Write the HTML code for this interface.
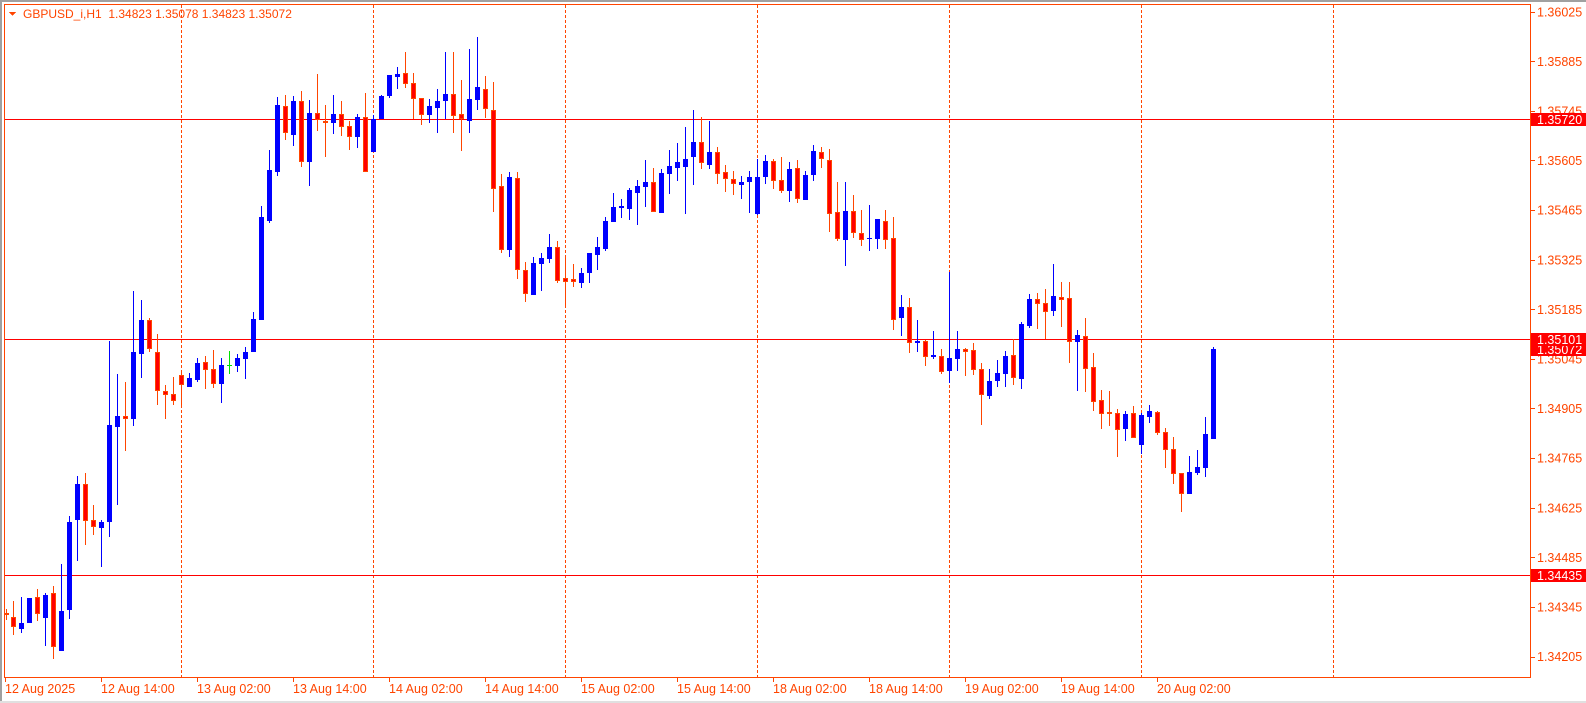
<!DOCTYPE html>
<html><head><meta charset="utf-8"><style>
html,body{margin:0;padding:0;background:#fff;width:1586px;height:703px;overflow:hidden}
svg{display:block}
text{font-family:"Liberation Sans",sans-serif;fill:#ff4500}
.b{fill:#0000ff}.w{fill:#ff4500}.r{fill:#ff0000;stroke:#ff4500;stroke-width:1}.g{fill:#00e000}
</style></head><body>
<svg width="1586" height="703" viewBox="0 0 1586 703" xmlns="http://www.w3.org/2000/svg" shape-rendering="crispEdges">
<rect x="0" y="0" width="1586" height="703" fill="#fff"/>
<rect x="0" y="0" width="1586" height="2" fill="#a0a0a0"/>
<rect x="0" y="0" width="2" height="703" fill="#a0a0a0"/>
<rect x="0" y="701" width="1586" height="2" fill="#e0e0e0"/>
<g stroke="#ff4500" stroke-width="1" stroke-dasharray="3,2">
<line x1="181.5" y1="5" x2="181.5" y2="677"/><line x1="373.5" y1="5" x2="373.5" y2="677"/><line x1="565.5" y1="5" x2="565.5" y2="677"/><line x1="757.5" y1="5" x2="757.5" y2="677"/><line x1="949.5" y1="5" x2="949.5" y2="677"/><line x1="1141.5" y1="5" x2="1141.5" y2="677"/><line x1="1333.5" y1="5" x2="1333.5" y2="677"/>
</g>
<g fill="#ff0000">
<rect x="4" y="119" width="1526" height="1"/><rect x="4" y="339" width="1526" height="1"/><rect x="4" y="575" width="1526" height="1"/>
</g>
<g id="c">
<rect class="w" x="6" y="609" width="1" height="11"/><rect class="r" x="4.5" y="613.5" width="4" height="1"/>
<rect class="w" x="13" y="601" width="1" height="34"/><rect class="r" x="11.5" y="617.5" width="4" height="9"/>
<rect class="b" x="21" y="597" width="1" height="36"/><rect class="b" x="19" y="623" width="5" height="6"/>
<rect class="b" x="27" y="598" width="5" height="25"/>
<rect class="w" x="37" y="589" width="1" height="32"/><rect class="r" x="35.5" y="597.5" width="4" height="16"/>
<rect class="b" x="45" y="593" width="1" height="53"/><rect class="b" x="43" y="595" width="5" height="23"/>
<rect class="w" x="53" y="586" width="1" height="73"/><rect class="r" x="51.5" y="593.5" width="4" height="53"/>
<rect class="b" x="61" y="564" width="1" height="87"/><rect class="b" x="59" y="611" width="5" height="40"/>
<rect class="b" x="69" y="516" width="1" height="103"/><rect class="b" x="67" y="522" width="5" height="88"/>
<rect class="b" x="77" y="476" width="1" height="85"/><rect class="b" x="75" y="484" width="5" height="36"/>
<rect class="w" x="85" y="473" width="1" height="72"/><rect class="r" x="83.5" y="484.5" width="4" height="36"/>
<rect class="w" x="93" y="505" width="1" height="30"/><rect class="r" x="91.5" y="520.5" width="4" height="6"/>
<rect class="b" x="101" y="520" width="1" height="47"/><rect class="b" x="99" y="522" width="5" height="6"/>
<rect class="b" x="109" y="341" width="1" height="196"/><rect class="b" x="107" y="425" width="5" height="97"/>
<rect class="b" x="117" y="374" width="1" height="131"/><rect class="b" x="115" y="416" width="5" height="11"/>
<rect class="w" x="125" y="382" width="1" height="69"/><rect class="r" x="123.5" y="416.5" width="4" height="2"/>
<rect class="b" x="133" y="291" width="1" height="135"/><rect class="b" x="131" y="352" width="5" height="67"/>
<rect class="b" x="141" y="300" width="1" height="78"/><rect class="b" x="139" y="320" width="5" height="34"/>
<rect class="w" x="149" y="318" width="1" height="34"/><rect class="r" x="147.5" y="320.5" width="4" height="28"/>
<rect class="w" x="157" y="334" width="1" height="71"/><rect class="r" x="155.5" y="352.5" width="4" height="38"/>
<rect class="w" x="165" y="385" width="1" height="34"/><rect class="r" x="163.5" y="391.5" width="4" height="3"/>
<rect class="w" x="173" y="377" width="1" height="28"/><rect class="r" x="171.5" y="394.5" width="4" height="6"/>
<rect class="w" x="181" y="370" width="1" height="38"/><rect class="r" x="179.5" y="375.5" width="4" height="9"/>
<rect class="b" x="189" y="373" width="1" height="14"/><rect class="b" x="187" y="378" width="5" height="9"/>
<rect class="b" x="197" y="358" width="1" height="24"/><rect class="b" x="195" y="363" width="5" height="17"/>
<rect class="w" x="205" y="356" width="1" height="33"/><rect class="r" x="203.5" y="362.5" width="4" height="7"/>
<rect class="w" x="213" y="350" width="1" height="38"/><rect class="r" x="211.5" y="369.5" width="4" height="14"/>
<rect class="b" x="221" y="358" width="1" height="45"/><rect class="b" x="219" y="365" width="5" height="19"/>
<rect class="g" x="229" y="351" width="1" height="23"/><rect class="g" x="227" y="365" width="5" height="1"/>
<rect class="b" x="237" y="354" width="1" height="18"/><rect class="b" x="235" y="358" width="5" height="8"/>
<rect class="b" x="245" y="347" width="1" height="32"/><rect class="b" x="243" y="352" width="5" height="7"/>
<rect class="b" x="253" y="312" width="1" height="40"/><rect class="b" x="251" y="319" width="5" height="33"/>
<rect class="b" x="261" y="206" width="1" height="114"/><rect class="b" x="259" y="217" width="5" height="103"/>
<rect class="b" x="269" y="150" width="1" height="73"/><rect class="b" x="267" y="170" width="5" height="51"/>
<rect class="b" x="277" y="97" width="1" height="79"/><rect class="b" x="275" y="105" width="5" height="67"/>
<rect class="w" x="285" y="95" width="1" height="45"/><rect class="r" x="283.5" y="106.5" width="4" height="26"/>
<rect class="b" x="293" y="96" width="1" height="50"/><rect class="b" x="291" y="101" width="5" height="34"/>
<rect class="w" x="301" y="91" width="1" height="76"/><rect class="r" x="299.5" y="101.5" width="4" height="60"/>
<rect class="b" x="309" y="100" width="1" height="86"/><rect class="b" x="307" y="113" width="5" height="49"/>
<rect class="w" x="317" y="74" width="1" height="57"/><rect class="r" x="315.5" y="113.5" width="4" height="6"/>
<rect class="w" x="325" y="105" width="1" height="52"/><rect class="r" x="323.5" y="121.5" width="4" height="1"/>
<rect class="b" x="333" y="95" width="1" height="39"/><rect class="b" x="331" y="114" width="5" height="9"/>
<rect class="w" x="341" y="101" width="1" height="35"/><rect class="r" x="339.5" y="114.5" width="4" height="12"/>
<rect class="w" x="349" y="121" width="1" height="29"/><rect class="r" x="347.5" y="126.5" width="4" height="10"/>
<rect class="b" x="357" y="114" width="1" height="34"/><rect class="b" x="355" y="117" width="5" height="20"/>
<rect class="w" x="365" y="93" width="1" height="79"/><rect class="r" x="363.5" y="117.5" width="4" height="54"/>
<rect class="b" x="373" y="115" width="1" height="37"/><rect class="b" x="371" y="119" width="5" height="33"/>
<rect class="b" x="381" y="95" width="1" height="24"/><rect class="b" x="379" y="96" width="5" height="23"/>
<rect class="b" x="389" y="75" width="1" height="23"/><rect class="b" x="387" y="75" width="5" height="21"/>
<rect class="b" x="397" y="67" width="1" height="22"/><rect class="b" x="395" y="74" width="5" height="3"/>
<rect class="w" x="405" y="52" width="1" height="36"/><rect class="r" x="403.5" y="73.5" width="4" height="10"/>
<rect class="w" x="413" y="73" width="1" height="46"/><rect class="r" x="411.5" y="83.5" width="4" height="15"/>
<rect class="w" x="421" y="98" width="1" height="27"/><rect class="r" x="419.5" y="98.5" width="4" height="16"/>
<rect class="b" x="429" y="99" width="1" height="24"/><rect class="b" x="427" y="106" width="5" height="9"/>
<rect class="b" x="437" y="89" width="1" height="44"/><rect class="b" x="435" y="101" width="5" height="7"/>
<rect class="b" x="445" y="52" width="1" height="67"/><rect class="b" x="443" y="94" width="5" height="7"/>
<rect class="w" x="453" y="52" width="1" height="81"/><rect class="r" x="451.5" y="94.5" width="4" height="21"/>
<rect class="w" x="461" y="80" width="1" height="71"/><rect class="r" x="459.5" y="114.5" width="4" height="4"/>
<rect class="b" x="469" y="49" width="1" height="84"/><rect class="b" x="467" y="99" width="5" height="22"/>
<rect class="b" x="477" y="37" width="1" height="73"/><rect class="b" x="475" y="87" width="5" height="13"/>
<rect class="w" x="485" y="76" width="1" height="42"/><rect class="r" x="483.5" y="89.5" width="4" height="19"/>
<rect class="w" x="493" y="82" width="1" height="130"/><rect class="r" x="491.5" y="110.5" width="4" height="78"/>
<rect class="w" x="501" y="174" width="1" height="79"/><rect class="r" x="499.5" y="186.5" width="4" height="63"/>
<rect class="b" x="509" y="172" width="1" height="85"/><rect class="b" x="507" y="177" width="5" height="73"/>
<rect class="w" x="517" y="172" width="1" height="107"/><rect class="r" x="515.5" y="178.5" width="4" height="91"/>
<rect class="w" x="525" y="262" width="1" height="40"/><rect class="r" x="523.5" y="270.5" width="4" height="23"/>
<rect class="b" x="533" y="257" width="1" height="38"/><rect class="b" x="531" y="263" width="5" height="32"/>
<rect class="b" x="541" y="253" width="1" height="38"/><rect class="b" x="539" y="258" width="5" height="6"/>
<rect class="b" x="549" y="234" width="1" height="29"/><rect class="b" x="547" y="247" width="5" height="12"/>
<rect class="w" x="557" y="241" width="1" height="42"/><rect class="r" x="555.5" y="247.5" width="4" height="33"/>
<rect class="w" x="565" y="256" width="1" height="51"/><rect class="r" x="563.5" y="278.5" width="4" height="3"/>
<rect class="w" x="573" y="264" width="1" height="23"/><rect class="r" x="571.5" y="279.5" width="4" height="2"/>
<rect class="b" x="581" y="268" width="1" height="20"/><rect class="b" x="579" y="273" width="5" height="10"/>
<rect class="b" x="589" y="253" width="1" height="30"/><rect class="b" x="587" y="253" width="5" height="20"/>
<rect class="b" x="597" y="237" width="1" height="33"/><rect class="b" x="595" y="247" width="5" height="8"/>
<rect class="b" x="605" y="217" width="1" height="34"/><rect class="b" x="603" y="221" width="5" height="28"/>
<rect class="b" x="613" y="193" width="1" height="29"/><rect class="b" x="611" y="207" width="5" height="15"/>
<rect class="b" x="621" y="199" width="1" height="19"/><rect class="b" x="619" y="206" width="5" height="2"/>
<rect class="b" x="629" y="188" width="1" height="32"/><rect class="b" x="627" y="190" width="5" height="19"/>
<rect class="b" x="637" y="180" width="1" height="45"/><rect class="b" x="635" y="186" width="5" height="7"/>
<rect class="b" x="645" y="160" width="1" height="47"/><rect class="b" x="643" y="182" width="5" height="5"/>
<rect class="w" x="653" y="168" width="1" height="44"/><rect class="r" x="651.5" y="182.5" width="4" height="29"/>
<rect class="b" x="661" y="169" width="1" height="44"/><rect class="b" x="659" y="173" width="5" height="40"/>
<rect class="b" x="669" y="150" width="1" height="44"/><rect class="b" x="667" y="166" width="5" height="8"/>
<rect class="b" x="677" y="143" width="1" height="38"/><rect class="b" x="675" y="162" width="5" height="6"/>
<rect class="b" x="685" y="127" width="1" height="87"/><rect class="b" x="683" y="159" width="5" height="8"/>
<rect class="b" x="693" y="110" width="1" height="75"/><rect class="b" x="691" y="142" width="5" height="15"/>
<rect class="w" x="701" y="117" width="1" height="52"/><rect class="r" x="699.5" y="142.5" width="4" height="20"/>
<rect class="b" x="709" y="121" width="1" height="48"/><rect class="b" x="707" y="152" width="5" height="13"/>
<rect class="w" x="717" y="147" width="1" height="37"/><rect class="r" x="715.5" y="152.5" width="4" height="21"/>
<rect class="w" x="725" y="165" width="1" height="27"/><rect class="r" x="723.5" y="172.5" width="4" height="6"/>
<rect class="w" x="733" y="171" width="1" height="24"/><rect class="r" x="731.5" y="179.5" width="4" height="4"/>
<rect class="b" x="741" y="176" width="1" height="23"/><rect class="b" x="739" y="182" width="5" height="3"/>
<rect class="b" x="749" y="171" width="1" height="42"/><rect class="b" x="747" y="177" width="5" height="5"/>
<rect class="b" x="757" y="159" width="1" height="56"/><rect class="b" x="755" y="177" width="5" height="37"/>
<rect class="b" x="765" y="155" width="1" height="29"/><rect class="b" x="763" y="161" width="5" height="16"/>
<rect class="w" x="773" y="159" width="1" height="30"/><rect class="r" x="771.5" y="161.5" width="4" height="19"/>
<rect class="w" x="781" y="157" width="1" height="36"/><rect class="r" x="779.5" y="180.5" width="4" height="10"/>
<rect class="b" x="789" y="162" width="1" height="40"/><rect class="b" x="787" y="169" width="5" height="22"/>
<rect class="w" x="797" y="160" width="1" height="43"/><rect class="r" x="795.5" y="168.5" width="4" height="30"/>
<rect class="b" x="805" y="171" width="1" height="29"/><rect class="b" x="803" y="175" width="5" height="25"/>
<rect class="b" x="813" y="145" width="1" height="36"/><rect class="b" x="811" y="151" width="5" height="24"/>
<rect class="w" x="821" y="147" width="1" height="21"/><rect class="r" x="819.5" y="152.5" width="4" height="6"/>
<rect class="w" x="829" y="149" width="1" height="83"/><rect class="r" x="827.5" y="160.5" width="4" height="53"/>
<rect class="w" x="837" y="182" width="1" height="59"/><rect class="r" x="835.5" y="212.5" width="4" height="26"/>
<rect class="b" x="845" y="182" width="1" height="84"/><rect class="b" x="843" y="211" width="5" height="29"/>
<rect class="w" x="853" y="195" width="1" height="43"/><rect class="r" x="851.5" y="211.5" width="4" height="21"/>
<rect class="w" x="861" y="210" width="1" height="36"/><rect class="r" x="859.5" y="233.5" width="4" height="6"/>
<rect class="b" x="869" y="205" width="1" height="46"/><rect class="b" x="867" y="238" width="5" height="1"/>
<rect class="b" x="877" y="219" width="1" height="30"/><rect class="b" x="875" y="219" width="5" height="20"/>
<rect class="w" x="885" y="210" width="1" height="39"/><rect class="r" x="883.5" y="221.5" width="4" height="18"/>
<rect class="w" x="893" y="217" width="1" height="113"/><rect class="r" x="891.5" y="238.5" width="4" height="81"/>
<rect class="b" x="901" y="295" width="1" height="41"/><rect class="b" x="899" y="307" width="5" height="11"/>
<rect class="w" x="909" y="298" width="1" height="55"/><rect class="r" x="907.5" y="307.5" width="4" height="35"/>
<rect class="b" x="917" y="320" width="1" height="32"/><rect class="b" x="915" y="341" width="5" height="2"/>
<rect class="w" x="925" y="340" width="1" height="26"/><rect class="r" x="923.5" y="341.5" width="4" height="15"/>
<rect class="b" x="933" y="331" width="1" height="28"/><rect class="b" x="931" y="355" width="5" height="2"/>
<rect class="w" x="941" y="349" width="1" height="25"/><rect class="r" x="939.5" y="356.5" width="4" height="15"/>
<rect class="b" x="949" y="272" width="1" height="111"/><rect class="b" x="947" y="358" width="5" height="13"/>
<rect class="b" x="957" y="331" width="1" height="40"/><rect class="b" x="955" y="349" width="5" height="10"/>
<rect class="w" x="965" y="348" width="1" height="28"/><rect class="r" x="963.5" y="349.5" width="4" height="2"/>
<rect class="w" x="973" y="343" width="1" height="32"/><rect class="r" x="971.5" y="350.5" width="4" height="19"/>
<rect class="w" x="981" y="363" width="1" height="62"/><rect class="r" x="979.5" y="369.5" width="4" height="25"/>
<rect class="b" x="989" y="369" width="1" height="30"/><rect class="b" x="987" y="381" width="5" height="15"/>
<rect class="b" x="997" y="360" width="1" height="27"/><rect class="b" x="995" y="373" width="5" height="8"/>
<rect class="b" x="1005" y="351" width="1" height="36"/><rect class="b" x="1003" y="356" width="5" height="18"/>
<rect class="w" x="1013" y="339" width="1" height="46"/><rect class="r" x="1011.5" y="355.5" width="4" height="22"/>
<rect class="b" x="1021" y="322" width="1" height="67"/><rect class="b" x="1019" y="324" width="5" height="55"/>
<rect class="b" x="1029" y="294" width="1" height="34"/><rect class="b" x="1027" y="299" width="5" height="27"/>
<rect class="w" x="1037" y="293" width="1" height="36"/><rect class="r" x="1035.5" y="299.5" width="4" height="4"/>
<rect class="w" x="1045" y="289" width="1" height="50"/><rect class="r" x="1043.5" y="303.5" width="4" height="8"/>
<rect class="b" x="1053" y="264" width="1" height="52"/><rect class="b" x="1051" y="296" width="5" height="15"/>
<rect class="w" x="1061" y="282" width="1" height="45"/><rect class="r" x="1059.5" y="297.5" width="4" height="2"/>
<rect class="w" x="1069" y="282" width="1" height="81"/><rect class="r" x="1067.5" y="298.5" width="4" height="43"/>
<rect class="b" x="1077" y="330" width="1" height="61"/><rect class="b" x="1075" y="335" width="5" height="7"/>
<rect class="w" x="1085" y="318" width="1" height="74"/><rect class="r" x="1083.5" y="336.5" width="4" height="32"/>
<rect class="w" x="1093" y="353" width="1" height="58"/><rect class="r" x="1091.5" y="367.5" width="4" height="34"/>
<rect class="w" x="1101" y="390" width="1" height="39"/><rect class="r" x="1099.5" y="400.5" width="4" height="13"/>
<rect class="w" x="1109" y="391" width="1" height="35"/><rect class="r" x="1107.5" y="412.5" width="4" height="1"/>
<rect class="w" x="1117" y="409" width="1" height="48"/><rect class="r" x="1115.5" y="413.5" width="4" height="16"/>
<rect class="b" x="1125" y="411" width="1" height="30"/><rect class="b" x="1123" y="414" width="5" height="15"/>
<rect class="w" x="1133" y="406" width="1" height="32"/><rect class="r" x="1131.5" y="413.5" width="4" height="24"/>
<rect class="b" x="1141" y="413" width="1" height="41"/><rect class="b" x="1139" y="415" width="5" height="30"/>
<rect class="b" x="1149" y="405" width="1" height="18"/><rect class="b" x="1147" y="411" width="5" height="6"/>
<rect class="w" x="1157" y="411" width="1" height="24"/><rect class="r" x="1155.5" y="412.5" width="4" height="20"/>
<rect class="w" x="1165" y="428" width="1" height="40"/><rect class="r" x="1163.5" y="432.5" width="4" height="17"/>
<rect class="w" x="1173" y="437" width="1" height="47"/><rect class="r" x="1171.5" y="449.5" width="4" height="24"/>
<rect class="w" x="1181" y="473" width="1" height="39"/><rect class="r" x="1179.5" y="473.5" width="4" height="20"/>
<rect class="b" x="1189" y="456" width="1" height="38"/><rect class="b" x="1187" y="472" width="5" height="22"/>
<rect class="b" x="1197" y="450" width="1" height="25"/><rect class="b" x="1195" y="467" width="5" height="6"/>
<rect class="b" x="1205" y="417" width="1" height="60"/><rect class="b" x="1203" y="434" width="5" height="34"/>
<rect class="b" x="1213" y="347" width="1" height="92"/><rect class="b" x="1211" y="349" width="5" height="90"/>
</g>
<rect x="4.5" y="4.5" width="1526" height="673" fill="none" stroke="#ff4500" stroke-width="1"/>
<polygon points="9,12 16,12 12.5,16" fill="#ff4500"/>
<text x="23" y="18" font-size="12">GBPUSD_i,H1&#160; 1.34823 1.35078 1.34823 1.35072</text>
<g fill="#ff4500">
<rect x="1531" y="12" width="4" height="1"/><rect x="1531" y="61" width="4" height="1"/><rect x="1531" y="111" width="4" height="1"/><rect x="1531" y="160" width="4" height="1"/><rect x="1531" y="210" width="4" height="1"/><rect x="1531" y="260" width="4" height="1"/><rect x="1531" y="309" width="4" height="1"/><rect x="1531" y="359" width="4" height="1"/><rect x="1531" y="408" width="4" height="1"/><rect x="1531" y="458" width="4" height="1"/><rect x="1531" y="508" width="4" height="1"/><rect x="1531" y="557" width="4" height="1"/><rect x="1531" y="607" width="4" height="1"/><rect x="1531" y="657" width="4" height="1"/>
</g>
<g font-size="12.5">
<text x="1537" y="16.5">1.36025</text><text x="1537" y="66">1.35885</text><text x="1537" y="115.5">1.35745</text><text x="1537" y="165">1.35605</text><text x="1537" y="214.5">1.35465</text><text x="1537" y="264.5">1.35325</text><text x="1537" y="314">1.35185</text><text x="1537" y="363.5">1.35045</text><text x="1537" y="413">1.34905</text><text x="1537" y="462.5">1.34765</text><text x="1537" y="512.5">1.34625</text><text x="1537" y="562">1.34485</text><text x="1537" y="611.5">1.34345</text><text x="1537" y="661">1.34205</text>
</g>
<rect x="1531" y="113" width="55" height="13" fill="#ff0000"/><text x="1537" y="124" font-size="12.5" style="fill:#fff">1.35720</text>
<rect x="1531" y="343" width="55" height="13" fill="#ff0000"/><text x="1537" y="354" font-size="12.5" style="fill:#fff">1.35072</text>
<rect x="1531" y="333" width="55" height="13" fill="#ff0000"/><text x="1537" y="344" font-size="12.5" style="fill:#fff">1.35101</text>
<rect x="1531" y="569" width="55" height="13" fill="#ff0000"/><text x="1537" y="580" font-size="12.5" style="fill:#fff">1.34435</text>
<g fill="#ff4500">
<rect x="5" y="678" width="1" height="4"/><rect x="101" y="678" width="1" height="4"/><rect x="197" y="678" width="1" height="4"/><rect x="293" y="678" width="1" height="4"/><rect x="389" y="678" width="1" height="4"/><rect x="485" y="678" width="1" height="4"/><rect x="581" y="678" width="1" height="4"/><rect x="677" y="678" width="1" height="4"/><rect x="773" y="678" width="1" height="4"/><rect x="869" y="678" width="1" height="4"/><rect x="965" y="678" width="1" height="4"/><rect x="1061" y="678" width="1" height="4"/><rect x="1157" y="678" width="1" height="4"/>
</g>
<g font-size="12.5">
<text x="5" y="693">12 Aug 2025</text><text x="101" y="693">12 Aug 14:00</text><text x="197" y="693">13 Aug 02:00</text><text x="293" y="693">13 Aug 14:00</text><text x="389" y="693">14 Aug 02:00</text><text x="485" y="693">14 Aug 14:00</text><text x="581" y="693">15 Aug 02:00</text><text x="677" y="693">15 Aug 14:00</text><text x="773" y="693">18 Aug 02:00</text><text x="869" y="693">18 Aug 14:00</text><text x="965" y="693">19 Aug 02:00</text><text x="1061" y="693">19 Aug 14:00</text><text x="1157" y="693">20 Aug 02:00</text>
</g>
</svg>
</body></html>
